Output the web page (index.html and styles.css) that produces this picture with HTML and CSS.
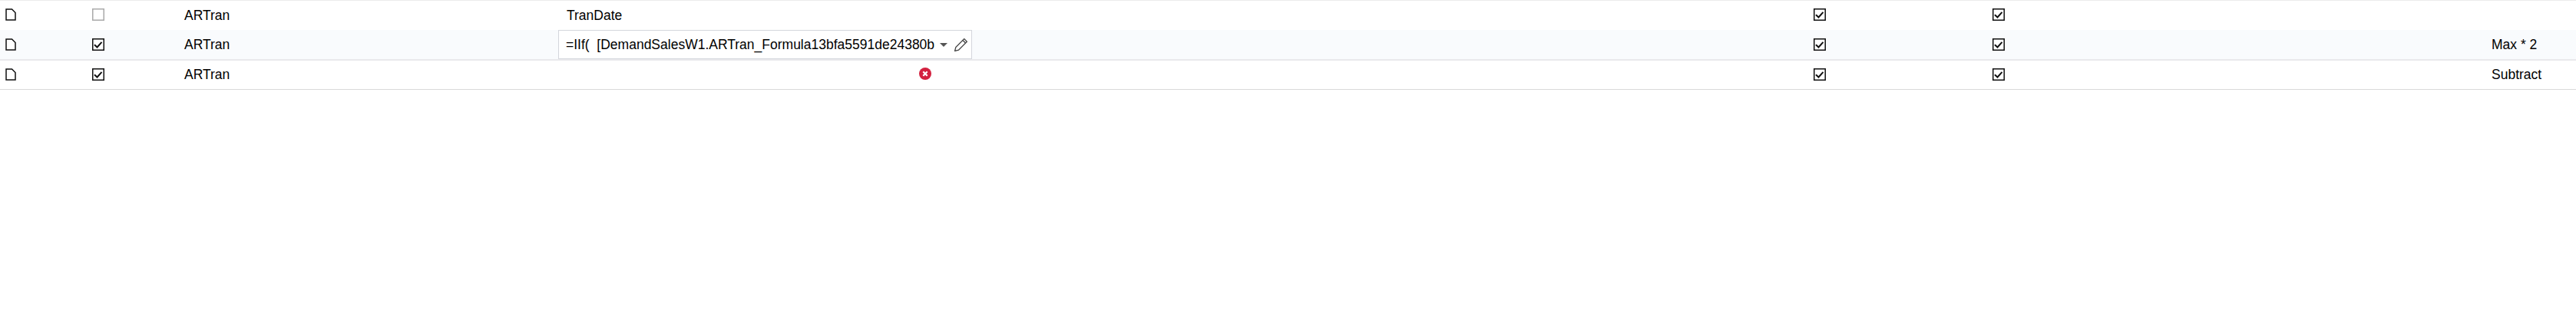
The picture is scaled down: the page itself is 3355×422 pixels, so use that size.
FILE: index.html
```html
<!DOCTYPE html>
<html lang="en">
<head>
    <meta charset="UTF-8">
    <title>Relations</title>
    <link rel="stylesheet" href="styles.css">
</head>
<body>
    <div class="grid">
        <div class="row">
            <div class="cell center"><svg class="file-icon" viewBox="0 0 14 16"><path d="M1 1H8.5L13 5.5V15H1Z"/></svg></div>
            <div class="cell center"><span class="check off"></span></div>
            <div class="cell text">ARTran</div>
            <div class="cell text field">TranDate</div>
            <div class="cell"></div>
            <div class="cell center"><span class="check"><svg viewBox="0 0 14 14"><path d="M2 7.3L5.5 10.5L11.5 3.8"/></svg></span></div>
            <div class="cell center"><span class="check"><svg viewBox="0 0 14 14"><path d="M2 7.3L5.5 10.5L11.5 3.8"/></svg></span></div>
            <div class="cell"></div>
            <div class="cell text"></div>
        </div>
        <div class="row active">
            <div class="cell center"><svg class="file-icon" viewBox="0 0 14 16"><path d="M1 1H8.5L13 5.5V15H1Z"/></svg></div>
            <div class="cell center"><span class="check"><svg viewBox="0 0 14 14"><path d="M2 7.3L5.5 10.5L11.5 3.8"/></svg></span></div>
            <div class="cell text">ARTran</div>
            <div class="cell">
                <div class="editor">
                    <span class="editor-value">=IIf(  [DemandSalesW1.ARTran_Formula13bfa5591de24380b</span>
                    <span class="caret"></span>
                    <svg class="pencil" viewBox="1 1 14 14"><path d="M1.5 14.5L2.5 10.5L11.5 1.5L14.5 4.5L5.5 13.5Z"/><path d="M10 3L13 6"/></svg>
                </div>
            </div>
            <div class="cell"></div>
            <div class="cell center"><span class="check"><svg viewBox="0 0 14 14"><path d="M2 7.3L5.5 10.5L11.5 3.8"/></svg></span></div>
            <div class="cell center"><span class="check"><svg viewBox="0 0 14 14"><path d="M2 7.3L5.5 10.5L11.5 3.8"/></svg></span></div>
            <div class="cell"></div>
            <div class="cell text">Max * 2</div>
        </div>
        <div class="row last">
            <div class="cell center"><svg class="file-icon" viewBox="0 0 14 16"><path d="M1 1H8.5L13 5.5V15H1Z"/></svg></div>
            <div class="cell center"><span class="check"><svg viewBox="0 0 14 14"><path d="M2 7.3L5.5 10.5L11.5 3.8"/></svg></span></div>
            <div class="cell text">ARTran</div>
            <div class="cell error-cell">
                <svg class="error-icon" viewBox="0 0 16 16"><circle cx="8" cy="8" r="8"/><path d="M5.3 5.3L10.7 10.7M10.7 5.3L5.3 10.7"/></svg>
            </div>
            <div class="cell"></div>
            <div class="cell center"><span class="check"><svg viewBox="0 0 14 14"><path d="M2 7.3L5.5 10.5L11.5 3.8"/></svg></span></div>
            <div class="cell center"><span class="check"><svg viewBox="0 0 14 14"><path d="M2 7.3L5.5 10.5L11.5 3.8"/></svg></span></div>
            <div class="cell"></div>
            <div class="cell text">Subtract</div>
        </div>
    </div>
</body>
</html>
```

FILE: styles.css
```css
html, body {
    margin: 0;
    padding: 0;
    background-color: #fff;
}
body {
    font-family: "Liberation Sans", Arial, sans-serif;
    font-size: 17.5px;
    color: #000;
    height: 422px;
    overflow: hidden;
}
.grid {
    border-top: 1px solid #ececec;
}
.row {
    display: grid;
    grid-template-columns: 29px 199px 499px 497px 1046px 200px 265px 498px 122px;
    height: 38px;
}
.row.active {
    background-color: #f9fbfd;
    border-bottom: 2px solid #e9e9ec;
}
.row.last {
    height: 37px;
    border-bottom: 1px solid #d9d9d9;
}
.cell {
    display: flex;
    align-items: center;
    min-width: 0;
}
.center {
    justify-content: center;
    align-items: flex-start;
    padding-top: 10px;
}
.active .center {
    padding-top: 11px;
}
.cell:nth-child(2) .check {
    margin-right: 1px;
}
.text {
    padding-left: 12px;
}
.field {
    padding-left: 11px;
}
.file-icon {
    width: 14px;
    height: 16px;
    margin-right: 1px;
}
.file-icon path {
    fill: #fff;
    stroke: #111;
    stroke-width: 1.5;
}
.check {
    box-sizing: border-box;
    width: 16px;
    height: 16px;
    border: 1px solid #111;
    box-shadow: inset 0 0 0 0.5px #111;
    background-color: #fff;
    display: block;
}
.check svg {
    display: block;
    width: 14px;
    height: 14px;
}
.check path {
    fill: none;
    stroke: #111;
    stroke-width: 2;
}
.check.off {
    border: 1px solid #aaa;
    box-shadow: inset 0 0 0 0.5px #aaa;
}
.editor {
    box-sizing: border-box;
    flex: none;
    width: 539px;
    height: 38px;
    padding-left: 9px;
    display: flex;
    align-items: center;
    background-color: #fff;
    border: 1px solid #d4d6dc;
}
.editor-value {
    white-space: pre;
}
.caret {
    width: 0;
    height: 0;
    margin-left: 7px;
    border-left: 5px solid transparent;
    border-right: 5px solid transparent;
    border-top: 5px solid #555;
}
.pencil {
    width: 17px;
    height: 17px;
    margin-left: 9px;
}
.pencil path {
    fill: none;
    stroke: #444;
    stroke-width: 1.1;
}
.error-cell {
    justify-content: flex-end;
    padding-right: 11px;
}
.error-icon {
    width: 16px;
    height: 16px;
    margin-top: -3px;
}
.error-icon circle {
    fill: #d3213f;
}
.error-icon path {
    stroke: #fff;
    stroke-width: 2.2;
    fill: none;
}
```
